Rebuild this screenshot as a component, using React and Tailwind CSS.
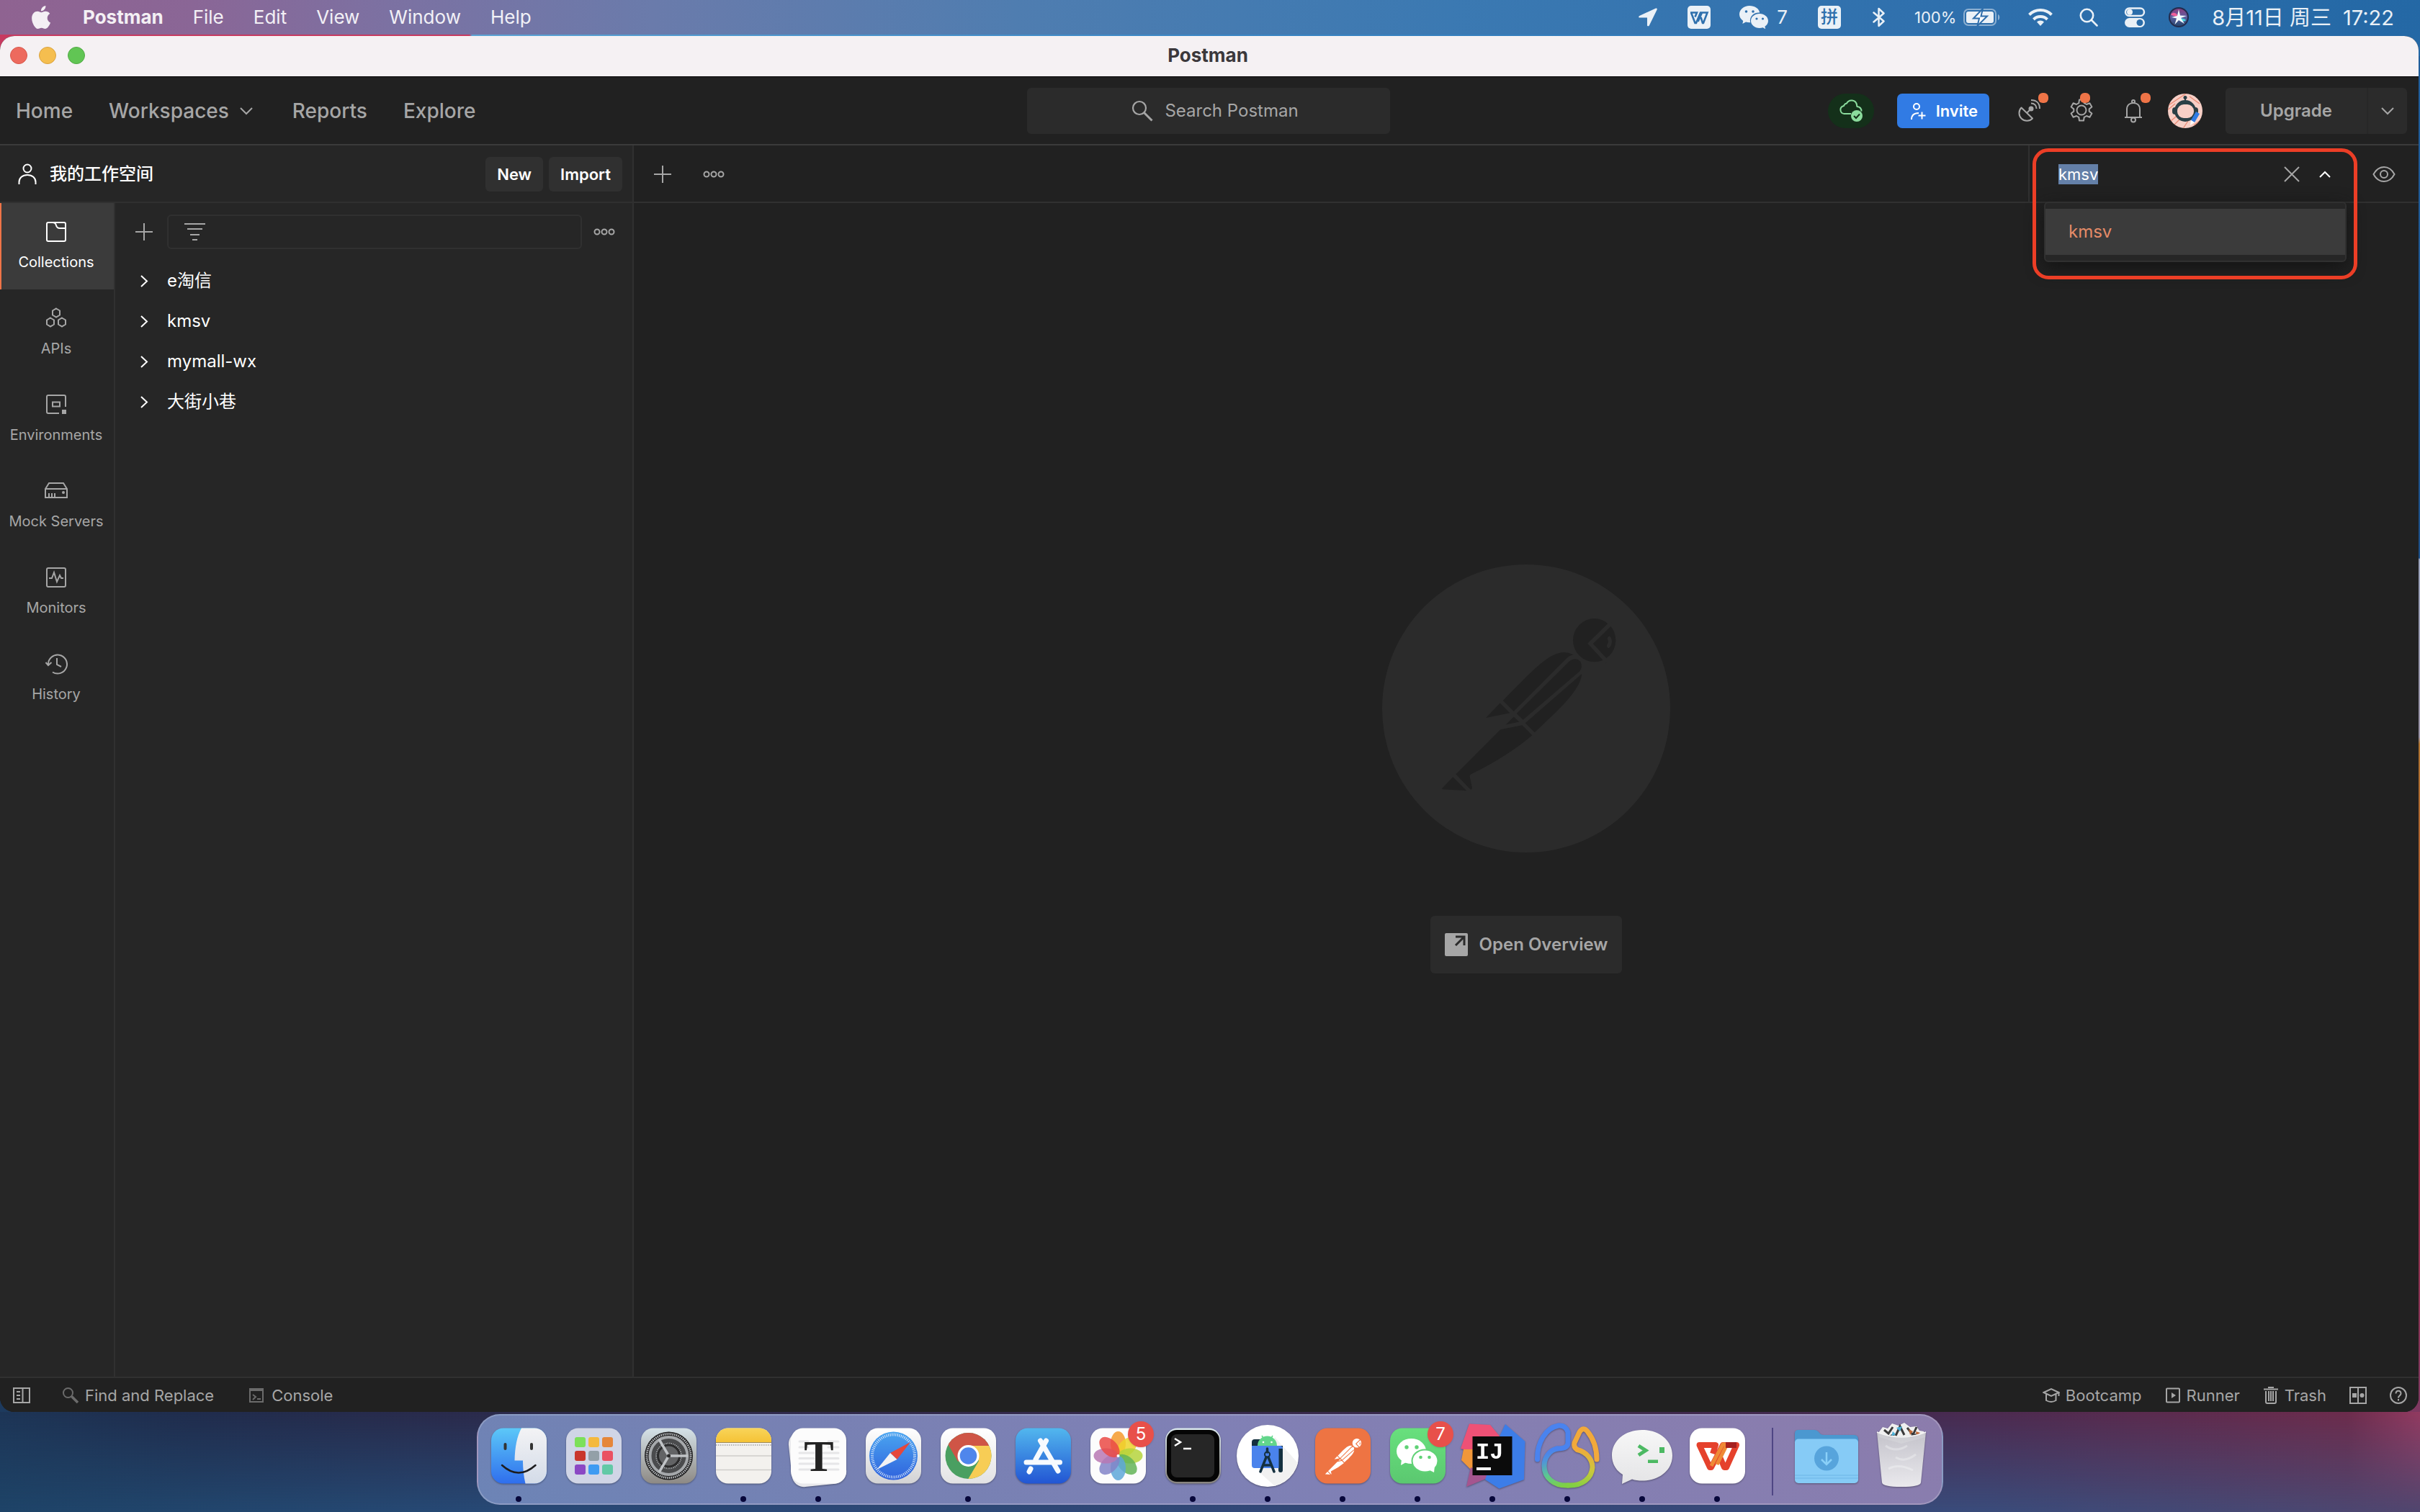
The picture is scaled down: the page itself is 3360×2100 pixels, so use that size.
import React from "react";

const Svg = ({ w = 32, h, box, className = "", children, ...rest }) => (
  <svg
    width={w}
    height={h || w}
    viewBox={box || `0 0 ${w} ${h || w}`}
    fill="none"
    stroke="currentColor"
    strokeWidth="2"
    aria-hidden="true"
    className={"shrink-0 " + className}
    {...rest}
  >
    {children}
  </svg>
);

/* ---------- menu bar ---------- */

const AppleLogo = () => (
  <Svg w={26} h={32} box="0 0 814 1000" stroke="none" className="mr-1">
    <path
      fill="currentColor"
      d="M788 341c-6 4-108 62-108 190 0 149 130 201 134 202-1 3-21 71-69 142-42 61-87 123-155 123s-85-40-163-40c-76 0-103 41-165 41s-106-57-155-127C49 790 4 663 4 542c0-194 126-297 251-297 66 0 121 43 163 43 39 0 101-46 176-46 29 0 131 3 198 99zM554 159c31-37 53-88 53-139 0-7-1-14-2-20-50 2-110 34-146 76-28 32-55 83-55 135 0 8 1 16 2 18 3 1 8 1 14 1 45 0 102-30 134-71z"
    />
  </Svg>
);

const WechatGlyph = () => (
  <Svg w={40} h={34} stroke="none" fill="currentColor">
    <path d="M14 1C6.300 1 0 6.200 0 12.800c0 3.700 2 7 5.200 9.200L4.400 26l4.600-2.500c2 .6 4 .8 6.200.7-2-8 5-14.500 13-13.700C27.500 5 21.300 1 14 1z" />
    <path d="M28 12c-6.600 0-12 4.400-12 10s5.400 10 12 10c1.600 0 3.200-.3 4.600-.8l3.600 2-.8-3.400c2.800-1.800 4.600-4.600 4.600-7.800 0-5.600-5.400-10-12-10z" />
    <g fill="#2f70ad">
      <circle cx="9.500" cy="9" r="1.800" />
      <circle cx="19" cy="9" r="1.800" />
      <circle cx="24" cy="19" r="1.600" />
      <circle cx="32.500" cy="19" r="1.600" />
    </g>
  </Svg>
);

const MenuBar = () => (
  <header className="flex h-12 shrink-0 items-center justify-between bg-[linear-gradient(to_right,#8f6391_0%,#8a6696_8%,#7c71a2_16%,#6a7bab_27%,#4f7db0_42%,#3b79b2_60%,#2f70ad_80%,#2468a5_100%)] pr-9 pl-11 text-[26px] text-white/90">
    <nav className="flex items-center gap-[41px]">
      <AppleLogo />
      <button className="font-bold">Postman</button>
      <button>File</button>
      <button>Edit</button>
      <button>View</button>
      <button>Window</button>
      <button>Help</button>
    </nav>
    <div className="flex items-center">
      <Svg w={26} stroke="none" className="mr-[42px]">
        <path fill="currentColor" d="M24 .6 1.200 11c-1.500.8-1.200 2.600.4 2.600H12v10.300c0 1.700 2 2 2.800.5L25.600 2.400C26.200 1 25.200.2 24 .6z" />
      </Svg>
      <Svg w={32} className="mr-10">
        <rect width="32" height="32" rx="5" fill="currentColor" stroke="none" />
        <path d="M4 9.500h9l-2.500 6M5 9.500 10.500 24h1.500L18 9.500h2L14.500 22m4-6 2.500 8h1L27.500 9.500H20" stroke="#2f70ad" strokeWidth="2.600" />
      </Svg>
      <WechatGlyph />
      <span className="mr-[42px] ml-3">7</span>
      <span className="mr-11 flex size-8 items-center justify-center rounded-[5px] bg-white/90 text-[24px] font-medium text-[#2f70ad]">拼</span>
      <Svg w={18} h={28} className="mr-10" strokeWidth="2.500" strokeLinejoin="round" strokeLinecap="round">
        <path d="m1.500 7.500 14 12-7 6.500V2l7 6.500-14 12" />
      </Svg>
      <span className="mr-2.5 text-[22px]">100%</span>
      <Svg w={51} h={24} className="mr-[38px]">
        <rect x="1" y="1" width="44" height="22" rx="6" opacity="0.5" />
        <rect x="4" y="4" width="38" height="16" rx="3" fill="currentColor" stroke="none" />
        <path d="M48 8v8c3-1 3-7 0-8z" fill="currentColor" stroke="none" opacity="0.5" />
        <path d="M27 0 14 13.500h8L19.500 24 33 10.500h-8.500z" fill="currentColor" stroke="#2d6dab" />
      </Svg>
      <Svg w={36} h={26} className="mr-9" strokeWidth="4">
        <path d="M2.500 9.500a22 22 0 0 1 31 0M8.500 16a13.500 13.500 0 0 1 19 0" />
        <path d="m18 25-5-5.500a7 7 0 0 1 10 0z" fill="currentColor" stroke="none" />
      </Svg>
      <Svg w={26} className="mr-9" strokeWidth="2.600" strokeLinecap="round">
        <circle cx="10.500" cy="10.500" r="8.700" />
        <path d="m17 17 7.500 7.500" />
      </Svg>
      <Svg w={30} h={28} className="mr-8">
        <rect x="2" y="1.500" width="26" height="10.500" rx="5.250" strokeWidth="2.500" />
        <circle cx="8" cy="6.800" r="4" fill="currentColor" stroke="none" />
        <rect x="1" y="15" width="28" height="13" rx="6.500" fill="currentColor" stroke="none" />
        <circle cx="22" cy="21.500" r="4.500" fill="#2a6ca9" stroke="none" />
      </Svg>
      <Svg w={28} className="mr-8" stroke="none">
        <defs>
          <linearGradient id="siri" x1="0" y1="0" x2="0" y2="1">
            <stop offset="0" stopColor="#8a3f80" />
            <stop offset="0.500" stopColor="#5a5fa0" />
            <stop offset="1" stopColor="#27476f" />
          </linearGradient>
        </defs>
        <circle cx="14" cy="14" r="14" fill="#232b4d" />
        <circle cx="14" cy="14" r="12" fill="url(#siri)" />
        <path d="M3 10c6-6 10 2 11 4-4-2-8-1-11-4z" fill="#f0609a" />
        <path d="M14 14c3 2 8 1 10 4-4 4-8 0-10-4z" fill="#49d5dc" />
        <path d="m14 3 2 8.500L25 12l-8 3 5 8-8-5-5.500 6L11 15.500 4 14l8-2z" fill="#f4fbff" />
      </Svg>
      <time className="flex gap-4 text-[29px]">
        <span>8月11日 周三</span>
        <span>17:22</span>
      </time>
    </div>
  </header>
);

/* ---------- Postman window ---------- */

const Chevron = ({ dir = "down", w = 20 }) => {
  const d = {
    down: "m2 6 8 8 8-8",
    up: "m3 14 7-7 7 7",
    right: "m6 3 8 7.500L6 18",
  }[dir];
  return (
    <Svg w={w} box="0 0 20 20">
      <path d={d} />
    </Svg>
  );
};

const Plus = () => (
  <Svg w={24}>
    <path d="M12 0v24M0 12h24" />
  </Svg>
);

const Dots = () => (
  <Svg w={30} h={12}>
    <circle cx="5" cy="6" r="3.500" />
    <circle cx="15" cy="6" r="3.500" />
    <circle cx="25" cy="6" r="3.500" />
  </Svg>
);

const Badged = ({ children, label, side }) => (
  <button aria-label={label} className="relative flex w-8 justify-center">
    {children}
    <span className={"absolute size-3.5 rounded-[6px] bg-[#ef7447] " + side} />
  </button>
);

const TopBar = () => (
  <div className="flex h-[95px] shrink-0 items-center border-b-2 border-[#3b3b3b] bg-[#212121] pr-4 pl-[22px] text-[28px] text-[#a6a6a6]">
    <nav className="flex flex-1 items-center gap-[50px] font-medium">
      <a href="#home">Home</a>
      <button className="mr-1 flex items-center gap-3.5">
        Workspaces
        <Chevron />
      </button>
      <a href="#reports">Reports</a>
      <a href="#explore">Explore</a>
    </nav>
    <label className="mr-2 flex h-16 w-[504px] items-center justify-center gap-4 rounded-md bg-[#2b2b2b] pl-[18px] text-[24px]">
      <Svg w={30} strokeWidth="2.200">
        <circle cx="11" cy="11" r="9" />
        <path d="m17.500 17.500 11 11" strokeWidth="3" />
      </Svg>
      <input
        aria-label="Search Postman"
        placeholder="Search Postman"
        className="field-sizing-content bg-transparent placeholder-[#a6a6a6] outline-none"
      />
    </label>
    <div className="flex flex-1 items-center justify-end">
      <button aria-label="Sync status" className="mr-8 flex h-12 w-16 items-center justify-center rounded-full bg-[#14301a] text-[#8bdc9d]">
        <Svg w={34} h={32}>
          <path d="M17 20H7.500a5.500 5.500 0 0 1-1-10.800 1 1 0 0 0 .9-1 4.500 4.500 0 0 1 3.600-2.700A7.500 7.500 0 0 1 25 7.500c.2 1 .1 2 .5 2.500 3.500.5 6 3 6 6.500" />
          <circle cx="25" cy="23" r="8" fill="currentColor" stroke="none" />
          <path d="m21 23 3 3 5-5.500" stroke="#14301a" />
        </Svg>
      </button>
      <button className="mr-10 flex h-12 items-center gap-3 rounded-[7px] bg-[#317be4] pr-4 pl-[18px] text-[22px] font-semibold text-white">
        <Svg w={24} h={24}>
          <circle cx="9" cy="6" r="4" />
          <path d="M2 24c0-6 3-9 10-9M16.500 13.500v10M11.500 18.500h10" />
        </Svg>
        Invite
      </button>
      <div className="mr-8 flex gap-10">
        <Badged label="Capture requests" side="-top-2 right-[-10px]">
          <Svg w={32}>
            <path d="M4.500 12.500a10.500 10.500 0 0 0 15.500 15z" strokeLinejoin="round" />
            <path d="m12 20 5-5" />
            <circle cx="18" cy="14" r="3.500" fill="currentColor" stroke="none" />
            <path d="M18 6.500c4.500 0 7.500 3 7.500 7.500M18 2c7.500 0 12 4.500 12 12" />
          </Svg>
        </Badged>
        <Badged label="Settings" side="-top-2 right-1">
          <Svg w={32}>
            <circle cx="16" cy="16" r="6.500" />
            <path
              strokeLinejoin="round"
              d="M13 1.500h6l.7 4.600 3.300 1.900 4.400-1.700 3 5.200-3.700 2.900v3.200l3.700 2.900-3 5.200-4.400-1.700-3.300 1.900-.7 4.600h-6l-.7-4.600L9 24l-4.400 1.700-3-5.200 3.700-2.900v-3.200l-3.700-2.900 3-5.200L9 8l3.300-1.900z"
            />
          </Svg>
        </Badged>
        <Badged label="Notifications" side="-top-2 right-[-8px]">
          <Svg w={26} h={34}>
            <circle cx="13" cy="4" r="2" />
            <path d="M4 25V15C4 9 8 6 13 6s9 3 9 9v10M1 26h24" />
            <circle cx="13" cy="29.500" r="3" />
          </Svg>
        </Badged>
      </div>
      <button aria-label="Account" className="mr-8">
        <Svg w={48} stroke="none">
          <clipPath id="face">
            <circle cx="24" cy="24" r="24" />
          </clipPath>
          <g clipPath="url(#face)">
            <rect width="48" height="48" fill="#f7cfc6" />
            <path d="M-2 18 28-2M-4 26 10 14M30 4l14 10M4 38l12-10M8 44l8-8M20 50l8-12M38 2l8 8M36 44l10-8" stroke="#e98973" strokeWidth="1.200" />
            <path d="M24 5v8" stroke="#2a3f45" strokeWidth="2" />
            <circle cx="24" cy="5.500" r="2.500" fill="#2a3f45" />
            <circle cx="24" cy="24" r="15" fill="#2a3f45" />
            <rect x="6" y="19" width="36" height="10" rx="4" fill="#2a3f45" />
            <rect x="13" y="15" width="23" height="19" rx="9" fill="#f7cfc6" />
            <path d="m32 37 7-12 5 3-7 12z" fill="#317be4" />
            <path d="m32 37 5 3-6 4z" fill="#fff" />
          </g>
        </Svg>
      </button>
      <div className="flex h-16 items-center rounded-md bg-[#2b2b2b] text-[24px]">
        <button className="h-full border-r-2 border-[#272727] px-12 font-semibold">Upgrade</button>
        <button aria-label="More plans" className="flex h-full w-[54px] items-center justify-center">
          <Chevron />
        </button>
      </div>
    </div>
  </div>
);

const navIcons = {
  Collections: (
    <>
      <rect x="3" y="3" width="26" height="26" rx="2" />
      <path d="M11 3q4 0 5 4 1 4 5 4h8" />
    </>
  ),
  APIs: (
    <>
      <path d="m16 2.500 5 3v6l-5 3-5-3v-6zM8 15.500l5 3v6l-5 3-5-3v-6zM24 15.500l5 3v6l-5 3-5-3v-6z" />
    </>
  ),
  Environments: (
    <>
      <path d="M20 28H5a2 2 0 0 1-2-2V5a2 2 0 0 1 2-2h22a2 2 0 0 1 2 2v14" />
      <rect x="11" y="12.500" width="10" height="6" />
      <rect x="24" y="23" width="6" height="6" fill="currentColor" stroke="none" />
    </>
  ),
  "Mock Servers": (
    <>
      <path d="M1 13 6 5h20l5 8v12H1zM1 13h30" />
      <path d="M6 19v6M10 19v6M14 19v6" />
      <circle cx="26" cy="18" r="2" fill="currentColor" stroke="none" />
    </>
  ),
  Monitors: (
    <>
      <rect x="3" y="3" width="26" height="26" rx="2" />
      <path d="M6 17h4l3-8 4 13 4-9 2 4h3" />
    </>
  ),
  History: (
    <>
      <path d="M5 17a13 13 0 1 1 6 10.500M1.500 14 5 18l4.500-4M17 8v9l6 3" />
    </>
  ),
};

const SideNav = () => (
  <nav className="w-40 shrink-0 border-r-2 border-[#303030]">
    {Object.keys(navIcons).map((name) => (
      <button
        key={name}
        className={
          "flex h-[120px] w-full flex-col items-center gap-3.5 border-l-2 pt-6 pr-1 text-[20px] " +
          (name === "Collections"
            ? "border-[#ef7447] bg-[#3b3b3b] text-white"
            : "border-transparent text-[#a6a6a6]")
        }
      >
        <Svg w={32}>{navIcons[name]}</Svg>
        <span className="leading-6 whitespace-nowrap">{name}</span>
      </button>
    ))}
  </nav>
);

const LeftPanel = () => (
  <aside className="flex w-[880px] shrink-0 flex-col border-r-2 border-[#303030] bg-[#262626] text-white">
    <div className="flex h-20 shrink-0 items-center border-b-2 border-[#303030] pt-0.5 pr-3.5 pl-[25px]">
      <Svg w={26} h={30}>
        <circle cx="13" cy="7" r="5.500" />
        <path d="M1.500 29v-3c0-6 4.500-10 11.500-10s11.500 4 11.500 10v3" />
      </Svg>
      <h1 className="ml-[18px] flex-1 text-[24px] font-medium">我的工作空间</h1>
      <button className="mr-2 h-12 rounded-md bg-[#303030] px-4 text-[22px] font-semibold">New</button>
      <button className="h-12 rounded-md bg-[#303030] px-4 text-[22px] font-semibold">Import</button>
    </div>
    <div className="flex min-h-0 flex-1">
      <SideNav />
      <div className="flex-1">
        <div className="flex items-center pt-4 pr-6 pl-7 text-[#a6a6a6]">
          <button aria-label="Create collection">
            <Plus />
          </button>
          <label className="mr-4 ml-5 flex h-12 flex-1 items-center rounded-md border-2 border-[#303030] pl-[22px]">
            <Svg w={30} h={26}>
              <path d="M0 2h29M4 9h21M8 17h13M11 24h7" />
            </Svg>
            <input aria-label="Filter collections" className="ml-4 w-full bg-transparent outline-none" />
          </label>
          <button aria-label="More collection actions">
            <Dots />
          </button>
        </div>
        <ul className="mt-4 text-[24px]">
          {["e淘信", "kmsv", "mymall-wx", "大街小巷"].map((name) => (
            <li key={name}>
              <button className="flex h-14 w-full items-center gap-[22px] pl-[30px] text-left">
                <Chevron dir="right" />
                {name}
              </button>
            </li>
          ))}
        </ul>
      </div>
    </div>
  </aside>
);

const Environment = () => (
  <div className="relative flex w-[542px] items-center border-l-2 border-[#303030] pt-0.5 pr-8 pl-10 text-[#a6a6a6]">
    <input
      aria-label="Environment"
      defaultValue="kmsv"
      className="field-sizing-content h-7 bg-[#6480a8] text-[22px] leading-7 text-white outline-none"
    />
    <button aria-label="Clear environment" className="mr-6 ml-auto">
      <Svg w={24}>
        <path d="m2 2 20 20M22 2 2 22" />
      </Svg>
    </button>
    <button aria-label="Close list" className="mr-14 text-white">
      <Chevron dir="up" />
    </button>
    <button aria-label="Environment quick look">
      <Svg w={32} h={24}>
        <path d="M1.500 12C5 5.500 10 2 16 2s11 3.500 14.500 10C27 18.500 22 22 16 22S5 18.500 1.500 12z" />
        <circle cx="16" cy="12" r="5" />
      </Svg>
    </button>
    <ul
      role="listbox"
      className="absolute top-[78px] left-5 z-10 w-[420px] rounded-md border-2 border-[#303030] bg-[#262626] py-2 text-[24px] text-[#e58b68] shadow-[0_8px_24px_#141414]"
    >
      <li role="option" aria-selected="true" className="flex h-16 items-center bg-[#3b3b3b] px-8">
        kmsv
      </li>
    </ul>
    <div className="pointer-events-none absolute top-1 left-1 z-20 h-[182px] w-[451px] rounded-[22px] border-5 border-[#ec3e26]" />
  </div>
);

const PostmanFigure = ({ size, box, color, gap, className }) => (
  <svg width={size} height={size} viewBox={box} preserveAspectRatio="none" className={className} aria-hidden="true">
    <g fill={color}>
      <ellipse cx="1004" cy="326" rx="89" ry="76" />
      <path d="M623 538C700 475 790 385 855 372Q885 364 916 377 900 380 890 388L668 576z" />
      <path d="M680 584 897 402Q925 383 945 400 957 418 943 435L707 606z" />
      <path d="M716 617 952 444C945 500 870 560 755 650z" />
      <path d="m611 547-59 52 100-17zM668 595l-33 28 56-10z" />
      <path d="m613 640 90-15 42 35Q640 735 490 797 484 800 485 806l10 39Q494 852 487 850l-60-53z" />
      <path d="m415 807-45 39Q368 850 373 850l99 5z" />
    </g>
    <g fill="none" stroke={gap} strokeWidth="15">
      <path d="m1076 264-89 74 70 64" />
      <path d="M1066 320q8 14-3 26" strokeLinecap="round" />
    </g>
  </svg>
);

const Workbench = () => (
  <main className="flex min-w-0 flex-1 flex-col bg-[#212121] text-[#a6a6a6]">
    <div className="flex h-20 shrink-0 border-b-2 border-[#303030]">
      <div className="flex flex-1 items-center gap-11 pt-0.5 pl-7">
        <button aria-label="New tab">
          <Plus />
        </button>
        <button aria-label="Tab options">
          <Dots />
        </button>
      </div>
      <Environment />
    </div>
    <div className="flex flex-1 flex-col items-center justify-center gap-[88px] pb-[58px]">
      <div className="size-[400px] rounded-full bg-[#2b2b2b]">
        <PostmanFigure size={400} box="120 60 1200 1012" color="#212121" gap="#2b2b2b" />
      </div>
      <button className="flex h-20 items-center gap-4 rounded-md bg-[#2b2b2b] px-5 text-[24px] font-semibold">
        <Svg w={32}>
          <rect width="32" height="32" rx="2" fill="currentColor" stroke="none" />
          <path d="M15 5h12v12M26 6 15 17" stroke="#2b2b2b" strokeWidth="3" />
        </Svg>
        Open Overview
      </button>
    </div>
  </main>
);

const Footer = () => (
  <footer className="flex h-[49px] shrink-0 items-center justify-between border-t-2 border-[#303030] bg-[#212121] px-4 text-[22px] text-[#a6a6a6]">
    <div className="flex items-center">
      <button aria-label="Toggle sidebar" className="mr-11">
        <Svg w={26} h={24}>
          <path d="M3 2h22v20H3zM15.500 2v20M7 7h5M7 12h5M7 17h5" />
        </Svg>
      </button>
      <button className="mr-12 flex items-center gap-2">
        <Svg w={24} className="text-[#6b6b6b]">
          <circle cx="8.500" cy="8.500" r="6.500" />
          <path d="m13.500 13.500 8.500 8.500" strokeWidth="3.500" />
        </Svg>
        Find and Replace
      </button>
      <button className="flex items-center gap-2.5">
        <Svg w={22} className="text-[#6b6b6b]">
          <path d="M2 2h18v18H2zM2 4h18M6 10l4 3-4 4M12 16h5" />
        </Svg>
        Console
      </button>
    </div>
    <div className="flex items-center">
      <button className="mr-8 flex items-center gap-2">
        <Svg w={24} h={22}>
          <path d="M1.500 7 12 2l10.500 5L12 12zM5 9v9q7 4 13.500 0V9M22.500 7v5" />
        </Svg>
        Bootcamp
      </button>
      <button className="mr-8 flex items-center gap-2">
        <Svg w={22}>
          <rect x="2" y="1.500" width="18" height="19" rx="1" />
          <path d="m9 7 6 4-6 4z" fill="currentColor" stroke="none" />
        </Svg>
        Runner
      </button>
      <button className="mr-8 flex items-center gap-2">
        <Svg w={22} h={24}>
          <path d="M1 3.500h20M7 1h8M4 6v15q0 2 2 2h10q2 0 2-2V6M8 6v14M11 6v14M14 6v14" />
        </Svg>
        Trash
      </button>
      <button aria-label="Two-pane view" className="mr-8">
        <Svg w={24}>
          <path d="M1 1h22v22H1zM12 1v22" />
          <rect x="4" y="9" width="6" height="6" fill="currentColor" stroke="none" />
          <circle cx="17.500" cy="12" r="3" fill="currentColor" stroke="none" />
        </Svg>
      </button>
      <button aria-label="Help">
        <Svg w={24}>
          <circle cx="12" cy="12" r="11" />
          <path d="M8.500 9.500c0-5 7-5 7 0 0 2.500-3.500 3-3.500 6M12 17v2.500" />
        </Svg>
      </button>
    </div>
  </footer>
);

const Window = () => (
  <section className="flex min-h-0 flex-1 flex-col bg-[linear-gradient(to_right,#1d3a5e,#1d3a5e),linear-gradient(to_right,#c73a60_0%,#c73a60_19.400%,#5ba3d4_19.500%,#3a86c4_50%,#2468a5_100%),linear-gradient(to_bottom,#1f5e9c_0%,#1c4f88_38%,#9aa3bd_38.100%,#9a94a8_51%,#b07430_51.500%,#b0552f_65%,#a02a40_80%,#7d3860_100%)] bg-[size:50%_40px,100%_30px,100%_100%] bg-[position:left_bottom,left_top,left_top] bg-no-repeat pt-0.5 pr-0.5">
    <div className="flex min-h-0 flex-1 flex-col overflow-hidden rounded-[20px] bg-[#212121]">
      <div className="relative flex h-[57px] shrink-0 items-center justify-center border-b border-black bg-[#f5f1f3] pr-1 pb-0.5 text-[26px] font-bold text-[#3b383b]">
        <div className="absolute left-3.5 flex gap-4">
          <button aria-label="Close" className="size-6 rounded-full border border-[#d8584c] bg-[#ed6a5e]" />
          <button aria-label="Minimize" className="size-6 rounded-full border border-[#d9a23f] bg-[#f5be4f]" />
          <button aria-label="Zoom" className="size-6 rounded-full border border-[#52aa45] bg-[#61c554]" />
        </div>
        Postman
      </div>
      <TopBar />
      <div className="flex min-h-0 flex-1">
        <LeftPanel />
        <Workbench />
      </div>
      <Footer />
    </div>
  </section>
);

/* ---------- dock ---------- */

const Tile = ({ fill, ...rest }) => <rect x="14" y="9.500" width="77" height="77" rx="17" fill={fill} {...rest} />;
const Gradient = ({ id, from, to }) => (
  <linearGradient id={id} x1="0" y1="0" x2="0" y2="1">
    <stop offset="0" stopColor={from} />
    <stop offset="1" stopColor={to} />
  </linearGradient>
);

const Finder = () => (
  <>
    <Gradient id="fa" from="#5cc8f8" to="#2f6eed" />
    <Gradient id="fb" from="#f3f3f5" to="#d3dbe8" />
    <Tile fill="url(#fa)" />
    <path fill="url(#fb)" d="M56 9.500h18a17 17 0 0 1 17 17v43a17 17 0 0 1-17 17H61.500Q58 72 58 54.500H46.500Q47 26 56 9.500z" />
    <path d="M33.500 32v6M70 32v6" stroke="#333" strokeWidth="4" strokeLinecap="round" />
    <path d="M29 61q23 21 46.500 0" stroke="#1d1d1f" strokeWidth="2.500" fill="none" strokeLinecap="round" />
  </>
);

const Launchpad = () => (
  <>
    <Tile fill="#d0d5e6" />
    {["#7ce05a", "#f4b93e", "#e5863a", "#c9362c", "#93a0a8", "#ea5162", "#8b48c4", "#3f9bf2", "#62c9a6"].map((c, i) => (
      <rect key={c} x={26 + (i % 3) * 19} y={22 + Math.floor(i / 3) * 19} width="15" height="14" rx="3" fill={c} />
    ))}
  </>
);

const Settings = () => (
  <>
    <Gradient id="st" from="#d5e2e8" to="#8d8984" />
    <Tile fill="url(#st)" />
    <circle cx="52.500" cy="48" r="33.500" fill="#1f1f20" />
    <circle cx="52.500" cy="48" r="30.500" fill="none" stroke="#b9bcbf" strokeWidth="3" strokeDasharray="1.500 1.200" />
    <circle cx="52.500" cy="48" r="26" fill="#4a4b4d" stroke="#a5a8ab" strokeWidth="4" />
    <circle cx="52.500" cy="48" r="16" fill="#626365" stroke="#2b2b2c" strokeWidth="5" />
    <circle cx="52.500" cy="48" r="17.500" fill="none" stroke="#a2a5a8" strokeWidth="2" strokeDasharray="1.500 1" />
    <path d="M52.500 48H79M52.500 48 39 25M52.500 48 39 71" stroke="#c0c3c6" strokeWidth="3.500" />
    <circle cx="52.500" cy="48" r="2.500" fill="#2a2a2b" />
  </>
);

const Notes = () => (
  <>
    <clipPath id="nc">
      <Tile />
    </clipPath>
    <g clipPath="url(#nc)">
      <Gradient id="nf" from="#fadd6b" to="#f5c235" />
      <rect width="104" height="96" fill="#f3f1ee" />
      <rect width="104" height="29.500" fill="url(#nf)" />
      <path d="M0 29.500h104" stroke="#9c8a5c" />
      <path d="M14 33h77" stroke="#b5b5b5" strokeWidth="2" strokeDasharray="1.500 1.500" />
      <path d="M0 48h104M0 67.500h104" stroke="#cfcdca" strokeWidth="1.500" />
    </g>
  </>
);

const Typora = () => (
  <>
    <rect x="13" y="12" width="76" height="77" rx="17" fill="#e9e9ec" transform="rotate(-6 52 50)" />
    <Tile fill="#fcfcfc" />
    <path d="M26 28h12M66 28h14M26 36h12M66 36h14M26 44h20M59 44h21M26 51.500h20M59 51.500h21M26 59h20M59 59h21M26 67h20M59 67h21" stroke="#e6e6e8" strokeWidth="3" strokeLinecap="round" />
    <text x="53" y="69" textAnchor="middle" fontFamily="Liberation Serif, serif" fontWeight="700" fontSize="62" fill="#222">T</text>
  </>
);

const Safari = () => (
  <>
    <Gradient id="sa" from="#ffffff" to="#d2d2d4" />
    <Gradient id="sb" from="#4aa5f0" to="#2f62dd" />
    <Tile fill="url(#sa)" />
    <circle cx="52.500" cy="48" r="33.500" fill="url(#sb)" />
    <circle cx="52.500" cy="48" r="29.500" fill="none" stroke="#d9e8fa" strokeWidth="4" strokeDasharray="1 1.575" />
    <path d="m76 29-18.500 24L48 44z" fill="#e5473b" />
    <path d="M29.500 67 48 44l9.500 9z" fill="#f2f2f4" />
  </>
);

const Chrome = () => (
  <>
    <Gradient id="ch" from="#ffffff" to="#e2e2e4" />
    <Tile fill="url(#ch)" />
    <clipPath id="cc">
      <circle cx="52.500" cy="48" r="32" />
    </clipPath>
    <g clipPath="url(#cc)">
      <rect x="20" y="16" width="65" height="65" fill="#4a9f61" />
      <path d="M52.500 48 38 56 22 28 30 10h60v24H52.500z" fill="#cf5546" />
      <path d="M52.500 34H90v50H50l17-29z" fill="#f7cd55" />
    </g>
    <circle cx="52.500" cy="48" r="15" fill="#fff" />
    <circle cx="52.500" cy="48" r="11.800" fill="#4f86ec" />
  </>
);

const AppStore = () => (
  <>
    <Gradient id="as" from="#52b7ee" to="#2255d3" />
    <Tile fill="url(#as)" />
    <g stroke="#f7fafe" strokeWidth="7" strokeLinecap="round">
      <path d="M56.500 27 42 53M48.500 27 73 69M29 57h46.500M35 66l-2 4" />
    </g>
  </>
);

const Photos = () => (
  <>
    <Tile fill="#fcfcfc" />
    {["#f49a2c", "#efd32c", "#b5d33c", "#63b457", "#5ea7d8", "#8284c8", "#b878b4", "#ea4a45"].map((c, i) => (
      <ellipse key={c} cx="52.500" cy="31" rx="10.500" ry="17" fill={c} opacity="0.850" transform={`rotate(${i * 45} 52.500 48)`} />
    ))}
    <circle cx="52.500" cy="48" r="2" fill="#fff" />
  </>
);

const Terminal = () => (
  <>
    <Gradient id="te" from="#dbe9ee" to="#86827d" />
    <Tile fill="url(#te)" />
    <rect x="16" y="12" width="73" height="72" rx="14" fill="#050505" />
    <rect x="22" y="18" width="60" height="60" rx="8" fill="#262626" />
    <path d="m27 24 8 5-8 5M39 38h11" stroke="#fff" strokeWidth="2.500" fill="none" />
  </>
);

const AndroidStudio = () => (
  <>
    <circle cx="52" cy="48" r="43" fill="#fff" />
    <path d="M62 22 94 58Q88 80 62 90L42 72z" fill="#f1f1f1" />
    <path d="M30 34V29q0-4 4-4h8v10zM67 34h6v34q0 3-3 3t-3-3z" fill="#14303f" />
    <path d="M38 34a13.500 13.500 0 0 1 27 0z" fill="#62d68b" />
    <path d="m44 20 3 5M59 20l-3 5" stroke="#62d68b" strokeWidth="1.500" />
    <circle cx="46" cy="29" r="1.300" fill="#fff" />
    <circle cx="57.500" cy="29" r="1.300" fill="#fff" />
    <path d="M30 34h39q4 0 4 4H67.500v27H34q-4 0-4-4z" fill="#4a83ec" />
    <circle cx="51.500" cy="46" r="3.500" fill="none" stroke="#14303f" strokeWidth="2" />
    <path d="M51.500 38v5M50 50l-8 20M53 50l8 20M46 61h11" stroke="#14303f" strokeWidth="3.500" strokeLinecap="round" fill="none" />
  </>
);

const PostmanTile = () => (
  <>
    <Tile fill="#ee7443" />
    <foreignObject x="28" y="23.500" width="50" height="50">
      <PostmanFigure size={50} box="370 250 722 605" color="#fff" gap="#ee7443" />
    </foreignObject>
  </>
);

const WeChat = () => (
  <>
    <Gradient id="we" from="#68e07d" to="#5bc870" />
    <Tile fill="url(#we)" />
    <g fill="#fff">
      <ellipse cx="43.500" cy="41.500" rx="20.500" ry="17.500" />
      <path d="m30 53-1 8 9-5z" />
      <ellipse cx="62.500" cy="55" rx="19" ry="16.500" fill="#60d276" />
      <ellipse cx="62.500" cy="55" rx="17" ry="14.500" />
      <path d="m76 62-1 9-8-4z" />
    </g>
    <g fill="#60d276">
      <circle cx="37" cy="36" r="2.700" />
      <circle cx="51" cy="36" r="2.700" />
      <circle cx="56.500" cy="50" r="2.300" />
      <circle cx="68.500" cy="50" r="2.300" />
    </g>
  </>
);

const IntelliJ = () => (
  <>
    <path d="M20 3.500 49 5l20 24-10 20-51-11z" fill="#ee5176" />
    <path d="M12 39h26v32H26L9 54z" fill="#f0973a" />
    <path d="m22 64 30 12-36 15z" fill="#a5558f" />
    <path d="M70 4 97.500 28 96 81 61.500 93.500 42 81l20-60z" fill="#3c7de8" />
    <rect x="24.500" y="21" width="55" height="54" fill="#0b0b0b" />
    <text x="29" y="52" fontFamily="Liberation Mono, monospace" fontWeight="700" fontSize="32" fill="#fff">IJ</text>
    <rect x="30" y="64" width="20" height="4" fill="#fff" />
  </>
);

const Navicat = () => (
  <>
    <linearGradient id="nw" gradientUnits="userSpaceOnUse" x1="30" y1="40" x2="48" y2="90">
      <stop offset="0" stopColor="#4a83ee" />
      <stop offset="0.200" stopColor="#4f93dc" />
      <stop offset="0.600" stopColor="#5cc88f" />
      <stop offset="1" stopColor="#80d043" />
    </linearGradient>
    <linearGradient id="nx" gradientUnits="userSpaceOnUse" x1="78" y1="38" x2="60" y2="90">
      <stop offset="0" stopColor="#f2a93b" />
      <stop offset="0.500" stopColor="#c9c83c" />
      <stop offset="1" stopColor="#80d043" />
    </linearGradient>
    <g fill="none" strokeWidth="7" strokeLinecap="round" strokeLinejoin="round">
      <path d="M53 89C33 90 20 78 20 62 20 50 28 40 38 38" stroke="url(#nw)" />
      <path d="M38 38Q53 38 53 30V15Q50 5 40 6C22 9 10 30 10.500 53" stroke="#4a83ee" />
      <path d="M53 89C73 90 86 79 87 64 87 54 80 43 66 39.500" stroke="url(#nx)" />
      <path d="M66 39.500C62 37 61 34 62 30L69 15Q74 7 80 14 93 30 93 53" stroke="#f2a93b" />
    </g>
  </>
);

const ChatShell = () => (
  <>
    <Gradient id="cs" from="#f7f7f7" to="#e4e4e6" />
    <path d="M52 12c24 0 42 15 42 35.500S76 82.500 52 82.500c-5 0-10-.6-14-2L24 87l1-13C15 68 10 58 10 47.500 10 27 28 12 52 12z" fill="url(#cs)" />
    <path d="m47 34 10 6.500-10 6.500" stroke="#4cb963" strokeWidth="5" fill="none" />
    <path d="M60 53.500h14V58H60zM76 36h7v8h-7z" fill="#4cb963" />
  </>
);

const Wps = () => (
  <>
    <Tile fill="#fff" />
    <g fill="none" strokeWidth="8" strokeLinejoin="round">
      <path d="M46 45 50 33H27.500L42 64h2L60 33h19L65 64h-3l-8-19" stroke="#e5412c" />
      <path d="M44 62 60 32h6L52 60" stroke="#ef8a35" strokeWidth="5" />
      <path d="M64 33h15" stroke="#a5201f" />
    </g>
  </>
);

const Downloads = () => (
  <>
    <path d="M8 17q0-5 5-5h22q4 0 7 4 2 3 6 3h42q6 0 6 6v20H8z" fill="#4b98d0" />
    <rect x="8" y="24.500" width="88" height="61.500" rx="5" fill="#86cbf6" />
    <path d="M8 75h88M8 79h88" stroke="#6db6e6" />
    <circle cx="52" cy="51.500" r="17" fill="#57a4dc" />
    <path d="M52 43v16M45 53l7 7 7-7" stroke="#8ad0f8" strokeWidth="2.500" fill="none" />
  </>
);

const Bin = () => (
  <>
    <Gradient id="bn" from="#c9c9cf" to="#f1f1f3" />
    <path d="m20 16 6-8 7 2 6-7 9 3 8-4 8 6 9-1 4 6 6 1 2 8-33 9-31-9z" fill="#efefef" />
    <path d="m28 12 6 5 6-9M44 20l6-13 6 12M60 9l8 10 5-11M34 22l8-4M64 22l10-4" stroke="#3a3a3a" strokeWidth="3" fill="none" />
    <path d="m45 9 8-2-3 7zM40 14l4 4-6 3z" fill="#4bb0d8" />
    <path d="m62 11 6 3-4 5zM72 14l6 2-5 4z" fill="#c06a3a" />
    <path d="M18 15q34 12 68 0l-7 70q-1 6-27 6t-27-6z" fill="url(#bn)" opacity="0.950" />
    <path d="M18 15q34 14 68 0" stroke="#f4f4f4" strokeWidth="1.500" fill="none" />
    <path d="M30 34q14 10 30 0M44 50q12 8 28-4M34 66q14-8 34 2" stroke="#fff" strokeWidth="3" fill="none" opacity="0.300" />
  </>
);

const dockApps = [
  { name: "Finder", Icon: Finder, open: true },
  { name: "Launchpad", Icon: Launchpad },
  { name: "System Preferences", Icon: Settings },
  { name: "Notes", Icon: Notes, open: true },
  { name: "Typora", Icon: Typora, open: true },
  { name: "Safari", Icon: Safari },
  { name: "Chrome", Icon: Chrome, open: true },
  { name: "App Store", Icon: AppStore },
  { name: "Photos", Icon: Photos, badge: "5" },
  { name: "Terminal", Icon: Terminal, open: true },
  { name: "Android Studio", Icon: AndroidStudio, open: true },
  { name: "Postman", Icon: PostmanTile, open: true },
  { name: "WeChat", Icon: WeChat, open: true, badge: "7" },
  { name: "IntelliJ IDEA", Icon: IntelliJ, open: true },
  { name: "Navicat", Icon: Navicat, open: true },
  { name: "SSH Shell", Icon: ChatShell, open: true },
  { name: "WPS Office", Icon: Wps, open: true },
];

const DockItem = ({ name, Icon, open, badge }) => (
  <button aria-label={name} className="relative flex w-[104px] flex-col items-center gap-2">
    <svg width="104" height="96" viewBox="0 0 104 96" className="overflow-visible drop-shadow-[0_1px_1px_rgba(0,0,0,0.35)]" aria-hidden="true">
      <Icon />
    </svg>
    {badge && (
      <span className="absolute top-0 left-[66px] flex size-9 items-center justify-center rounded-full bg-[#e8504a] text-[24px] text-white shadow">
        {badge}
      </span>
    )}
    {open && <span className="size-2 rounded-full bg-[#07073a]" />}
  </button>
);

const Dock = () => (
  <div className="relative flex shrink-0 justify-center bg-[linear-gradient(to_right,#1e4468_0%,#284a77_22%,#34497a_60%,#3a4c7b_82%,#50466f_100%)] pt-[3px] pb-2.5">
    <div className="absolute inset-0 bg-[linear-gradient(to_right,#1d3556_0%,#202c4c_8%,#2d2a4b_22%,#3a284b_60%,#472a50_80%,#6c2c4c_97%,#923a60_100%)] [mask-image:linear-gradient(black,transparent)]" />
    <div className="relative flex items-start rounded-[32px] border-2 border-white/20 bg-[linear-gradient(25deg,#6c84b6_0%,#7681b3_25%,#8080b5_55%,#8c7cac_100%)] px-1 pt-2 pb-0.5">
      {dockApps.map((app) => (
        <DockItem key={app.name} {...app} />
      ))}
      <div className="mr-[22px] ml-6 h-[94px] w-0.5 self-center bg-[#4f4684]" />
      <DockItem name="Downloads" Icon={Downloads} />
      <DockItem name="Trash" Icon={Bin} />
    </div>
  </div>
);

export default function App() {
  return (
    <div className="flex h-screen w-full flex-col overflow-hidden bg-[#1e4468] font-[Inter,'Noto_Sans_CJK_SC',sans-serif] leading-none">
      <MenuBar />
      <Window />
      <Dock />
    </div>
  );
}
